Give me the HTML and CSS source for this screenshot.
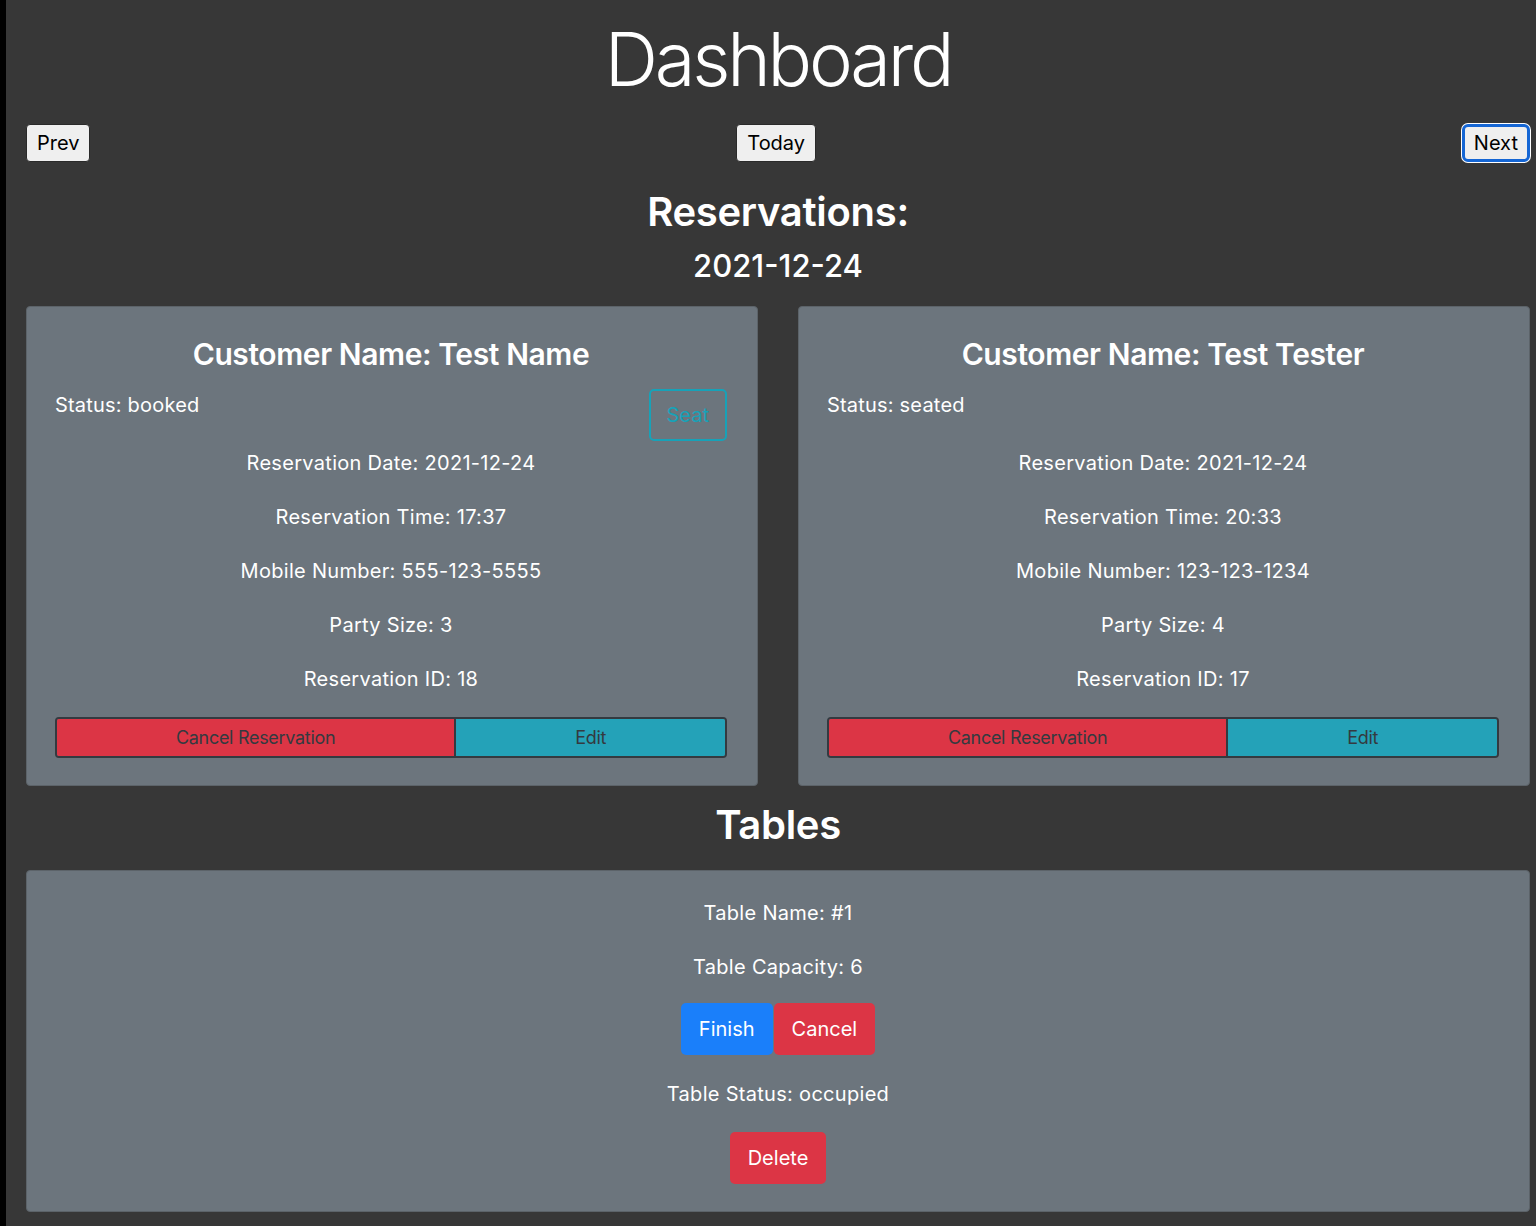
FILE: index.html
```html
<!DOCTYPE html>
<html lang="en">
<head>
<meta charset="utf-8">
<title>Dashboard</title>
<link rel="stylesheet" href="styles.css">
</head>
<body>
<div class="app">
  <div class="sidebar"></div>
  <main class="main">
    <h1 class="title">Dashboard</h1>
    <div class="nav">
      <button class="navbtn">Prev</button>
      <button class="navbtn">Today</button>
      <button class="navbtn focused">Next</button>
    </div>
    <h2 class="section">Reservations:</h2>
    <h3 class="date">2021-12-24</h3>
    <div class="cards">
      <div class="card">
        <h4 class="card-title">Customer Name: Test Name</h4>
        <div class="status-row">
          <p class="status">Status: booked</p>
          <button class="btn seat">Seat</button>
        </div>
        <p class="line">Reservation Date: 2021-12-24</p>
        <p class="line">Reservation Time: 17:37</p>
        <p class="line">Mobile Number: 555-123-5555</p>
        <p class="line">Party Size: 3</p>
        <p class="line">Reservation ID: 18</p>
        <div class="group">
          <button class="gbtn red">Cancel Reservation</button>
          <button class="gbtn teal">Edit</button>
        </div>
      </div>
      <div class="card">
        <h4 class="card-title">Customer Name: Test Tester</h4>
        <div class="status-row">
          <p class="status">Status: seated</p>
        </div>
        <p class="line">Reservation Date: 2021-12-24</p>
        <p class="line">Reservation Time: 20:33</p>
        <p class="line">Mobile Number: 123-123-1234</p>
        <p class="line">Party Size: 4</p>
        <p class="line">Reservation ID: 17</p>
        <div class="group">
          <button class="gbtn red">Cancel Reservation</button>
          <button class="gbtn teal">Edit</button>
        </div>
      </div>
    </div>
    <h2 class="section tables-title">Tables</h2>
    <div class="card table-card">
      <p class="line first">Table Name: #1</p>
      <p class="line">Table Capacity: 6</p>
      <div class="actions"><button class="btn primary">Finish</button><button class="btn danger">Cancel</button></div>
      <p class="line">Table Status: occupied</p>
      <div class="actions"><button class="btn danger">Delete</button></div>
    </div>
  </main>
</div>
</body>
</html>
```
FILE: styles.css
```css
* { box-sizing: border-box; }
html, body { margin: 0; padding: 0; background: #373737; }
body { font-family: Inter, "Noto Sans", sans-serif; color: #fff; }
.app { display: flex; min-height: 1226px; }
.sidebar { width: 6px; background: #000; flex: none; }
.main { flex: 1; padding: 12px 6px 0 20px; }
.title { margin: 0; font-size: 74px; font-weight: 300; line-height: 94px; text-align: center; letter-spacing: -3.2px; }
.nav { display: flex; justify-content: space-between; align-items: center; margin-top: 18px; }
.navbtn {
  font-family: Inter, "Noto Sans", sans-serif; font-size: 20px; line-height: 24px; color: #000;
  background: #efefef; border: 1px solid #2a2a2a; border-radius: 4px; padding: 6px 10px; height: 38px;
}
.navbtn.focused { border: 3px solid #1566d4; box-shadow: 0 0 0 1px #fff; border-radius: 6px; padding: 4px 9px; }
.section { margin: 26px 0 0; font-size: 40px; font-weight: 600; line-height: 48px; text-align: center; letter-spacing: -0.3px; }
.date { margin: 10px 0 0; font-size: 31px; font-weight: 500; line-height: 40px; text-align: center; }
.cards { display: flex; gap: 40px; margin-top: 20px; }
.card { flex: 1; background: #6c757d; border: 1px solid #5c6369; border-radius: 4px; padding: 29px 30px 27px 28px; }
.card-title { margin: 0; font-size: 30px; font-weight: 600; line-height: 36px; text-align: center; letter-spacing: -0.4px; }
.status-row { display: flex; justify-content: space-between; align-items: flex-start; margin-top: 17px; min-height: 53px; }
.status { margin: 1px 0 0; font-size: 20px; line-height: 30px; letter-spacing: 0.2px; }
.line { margin: 24px 0 0; font-size: 20px; line-height: 30px; text-align: center; letter-spacing: 0.3px; }
.status-row + .line { margin-top: 6px; }
.btn {
  font-family: Inter, "Noto Sans", sans-serif; font-size: 20px; line-height: 30px; font-weight: 400;
  padding: 10px 17px; border: 1px solid transparent; border-radius: 5px; color: #fff; background: transparent;
}
.seat { border: 2px solid #17a2b8; color: #17a2b8; padding: 9px 16px; }
.group { display: flex; margin-top: 23px; border: 2px solid #343a40; border-radius: 4px; overflow: hidden; }
.gbtn {
  flex: 1 1 auto; font-family: Inter, "Noto Sans", sans-serif; font-size: 18px; line-height: 37px; color: #343a40;
  border: none; padding: 0 12px; letter-spacing: -0.3px;
}
.gbtn.red { background: #dc3545; border-right: 2px solid #343a40; }
.gbtn.teal { background: #24a2b8; }
.tables-title { margin-top: 15px; }
.table-card { margin-top: 21px; padding: 27px 28px; text-align: center; }
.table-card .first { margin-top: 0; }
.actions { margin-top: 21px; display: flex; justify-content: center; gap: 1px; }
.primary { background: #1a7ffa; }
.danger { background: #dc3545; }
.actions + .line { margin-top: 24px; }
.line + .actions { margin-top: 21px; }
.table-card .line + .actions:last-child { margin-top: 23px; }
```
